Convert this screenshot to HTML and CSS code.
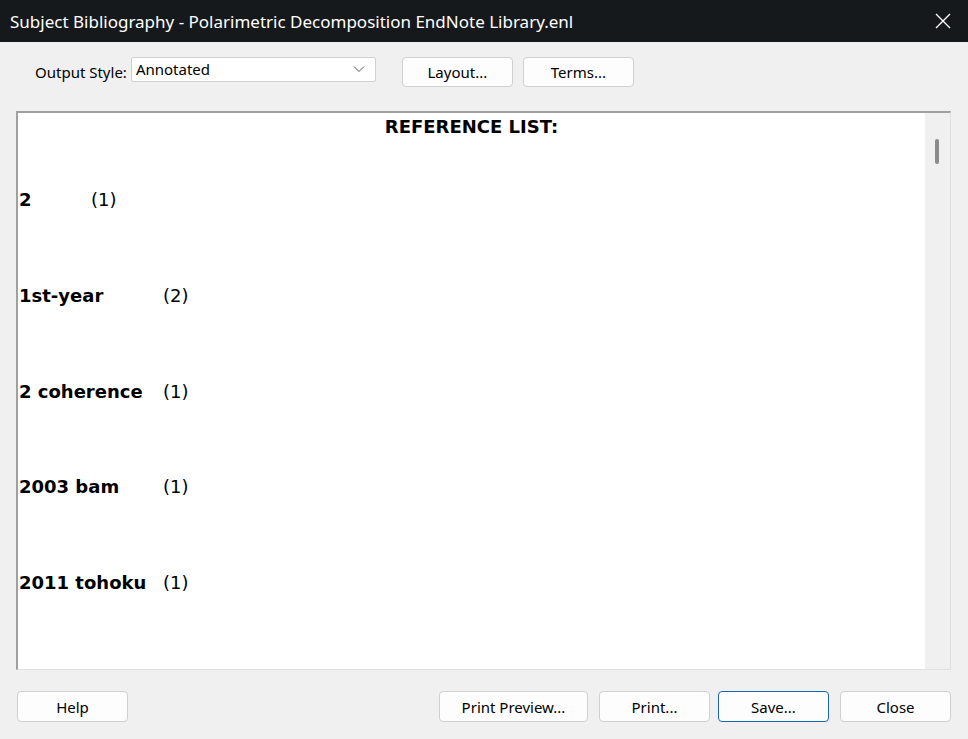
FILE: index.html
```html
<!DOCTYPE html>
<html>
<head>
<meta charset="utf-8">
<link rel="stylesheet" href="styles.css">
</head>
<body>
<div class="window">
  <div class="titlebar">
    <span class="title">Subject Bibliography - Polarimetric Decomposition EndNote Library.enl</span>
    <svg class="close-x" width="16" height="16" viewBox="0 0 16 16"><path d="M1 1L15 15M15 1L1 15" stroke="#fff" stroke-width="1.4" fill="none"/></svg>
  </div>
  <div class="toolbar">
    <span class="label">Output Style:</span>
    <div class="select"><span>Annotated</span><svg width="12" height="8" viewBox="0 0 12 8"><path d="M1 1.5L6 6.5L11 1.5" stroke="#555" stroke-width="1" fill="none"/></svg></div>
    <button class="btn btn-layout">Layout...</button>
    <button class="btn btn-terms">Terms...</button>
  </div>
  <div class="panel">
    <div class="doc">
      <div class="heading">REFERENCE LIST:</div>
      <div class="entry"><b class="term t1">2</b><span>(1)</span></div>
      <div class="entry"><b class="term t2">1st-year</b><span>(2)</span></div>
      <div class="entry"><b class="term t2">2 coherence</b><span>(1)</span></div>
      <div class="entry"><b class="term t2">2003 bam</b><span>(1)</span></div>
      <div class="entry"><b class="term t2">2011 tohoku</b><span>(1)</span></div>
    </div>
    <div class="scrollbar"><div class="thumb"></div></div>
  </div>
  <div class="footer">
    <button class="btn">Help</button>
    <div class="spacer"></div>
    <button class="btn btn-wide">Print Preview...</button>
    <button class="btn">Print...</button>
    <button class="btn btn-default">Save...</button>
    <button class="btn">Close</button>
  </div>
</div>
</body>
</html>
```
FILE: styles.css
```css
html, body { margin: 0; padding: 0; }
body { background: #f0f0f0; width: 968px; height: 739px; overflow: hidden; }
.window { display: flex; flex-direction: column; height: 739px; font-family: "Noto Sans", "Open Sans", sans-serif; }
.titlebar { height: 42px; background: #16191c; color: #fff; display: flex; align-items: center; padding: 0 17px 0 10px; }
.title { font-size: 17px; flex: 1; letter-spacing: 0; }
.close-x { display: block; }
.toolbar { display: flex; align-items: center; height: 60px; padding-left: 35px; font-size: 15px; color: #000; }
.label { margin-right: 4px; }
.select { width: 245px; height: 25px; background: #fff; border: 1px solid #d0d0d0; border-radius: 2px; display: flex; align-items: center; justify-content: space-between; padding: 0 10px 0 4px; box-sizing: border-box; margin-right: 26px; position: relative; top: -3px; }
.btn { font-family: "Noto Sans", "Open Sans", sans-serif; font-size: 15px; color: #000; background: #fdfdfd; border: 1px solid #d0d0d0; border-radius: 4px; width: 111px; height: 30px; padding: 0; }
.btn-layout { margin-right: 10px; }
.panel { margin: 9px 17px 0 16px; height: 559px; display: flex; background: #fff; border-top: 2px solid #a0a0a0; border-left: 2px solid #a0a0a0; border-bottom: 1px solid #e0e0e0; border-right: 1px solid #e0e0e0; box-sizing: border-box; }
.doc { flex: 1; font-family: "DejaVu Sans", sans-serif; font-size: 18px; color: #000; }
.heading { text-align: center; font-weight: bold; padding-top: 3px; height: 73px; }
.entry { height: 95.75px; display: flex; align-items: flex-start; padding-left: 1px; }
.term { display: inline-block; }
.t1 { width: 72px; }
.t2 { width: 144px; }
.scrollbar { width: 25px; background: #f0f0f0; position: relative; }
.thumb { position: absolute; left: 10px; top: 26px; width: 4px; height: 25px; background: #8a8a8a; border-radius: 2px; }
.footer { display: flex; margin-top: 21px; padding: 0 17px 0 17px; }
.spacer { flex: 1; }
.footer .btn { width: 111px; height: 31px; margin-left: 11px; }
.footer .btn:first-child { margin-left: 0; }
.footer .btn-wide { width: 149px; }
.footer .btn-default { border-color: #1a64b4; margin-left: 8px; }
```
